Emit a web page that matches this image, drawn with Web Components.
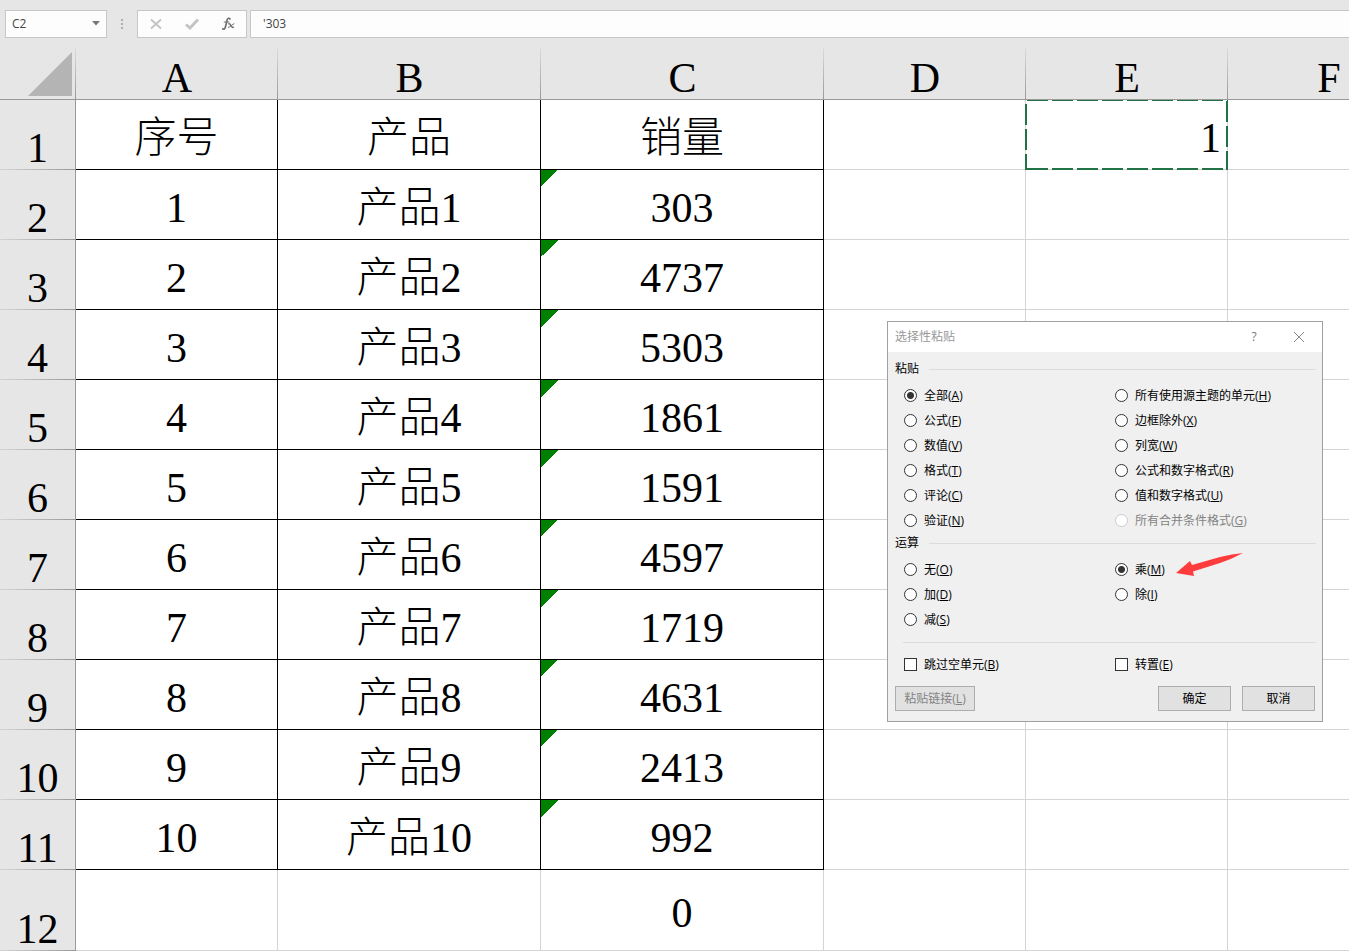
<!DOCTYPE html>
<html lang="zh-CN">
<head>
<meta charset="utf-8">
<title>选择性粘贴</title>
<style>
  body {
    margin: 0;
    background: #fff;
    color: #000;
    font: 12px/20px "Open Sans", "Noto Sans CJK SC", sans-serif;
  }
</style>
</head>
<body>

<sheet-app>
  <formula-bar slot="bar" cell="C2" value="'303"></formula-bar>
  <sheet-grid></sheet-grid>
  <paste-dialog slot="dialog" heading="选择性粘贴">
    <option-group id="paste" label="粘贴"></option-group>
    <option-group id="operation" label="运算"></option-group>
    <option-group id="extras" type="checkbox"></option-group>
    <pointer-arrow slot="note"></pointer-arrow>
  </paste-dialog>
</sheet-app>

<script>
function attach(el, html) {
  const template = document.createElement('template');
  template.innerHTML = html;
  const shadow = el.attachShadow({ mode: 'open' });
  shadow.appendChild(template.content.cloneNode(true));
  return shadow;
}

// "全部(A)" -> "全部(<u>A</u>)"
function mnemonic(text) {
  return text.replace(/\((\w)\)$/, '(<u>$1</u>)');
}

class SheetApp extends HTMLElement {
  constructor() {
    super();
    attach(this, `
      <style>
        :host {
          display: flex;
          flex-direction: column;
          position: relative;
          height: 100vh;
          overflow: hidden;
        }
        /* the dialog floats over the sheet */
        slot[name="dialog"]::slotted(*) {
          position: absolute;
          left: 887px;
          top: 321px;
        }
      </style>
      <slot name="bar"></slot>
      <slot></slot>
      <slot name="dialog"></slot>
    `);
  }
}

class FormulaBar extends HTMLElement {
  constructor() {
    super();
    this._root = attach(this, `
      <style>
        :host {
          display: flex;
          flex: none;
          padding: 10px 0 10px 5px;
          background: #e6e6e6;
        }
        .box {
          box-sizing: border-box;
          display: flex;
          height: 28px;
          background: #fdfdfd;
          border: 1px solid #c6c6c6;
        }
        .name { width: 102px; }
        .tools { width: 110px; margin-right: 3px; }
        .formula { flex: 1; border-right: 0; }
        input {
          flex: 1;
          min-width: 0;
          box-sizing: border-box;
          padding: 0 6px;
          border: 0;
          outline: 0;
          background: none;
          font: inherit;
          color: #444;
        }
        .formula input { padding: 0 12px; }
        button {
          display: grid;
          place-items: center;
          padding: 0;
          border: 0;
          background: none;
        }
        .name button { width: 20px; }
        .tools button { flex: 1; }
        .grip {
          width: 30px;
          display: grid;
          place-items: center;
        }
      </style>
      <div class="box name">
        <input id="cell" aria-label="名称框">
        <button aria-label="展开">
          <svg width="8" height="6"><path d="M0 0h8L4 4.500z" fill="#777"/></svg>
        </button>
      </div>
      <div class="grip">
        <svg width="2" height="10"><path d="M0 0h2v2H0zM0 4h2v2H0zM0 8h2v2H0z" fill="#adadad"/></svg>
      </div>
      <div class="box tools">
        <button aria-label="取消">
          <svg width="12" height="12"><path d="M1 1.5L11 10.5M11 1.5L1 10.5" stroke="#c3c3c3" stroke-width="1.8"/></svg>
        </button>
        <button aria-label="输入">
          <svg width="14" height="12"><path d="M1 6.5L5 10L13 1.5" fill="none" stroke="#c3c3c3" stroke-width="2.8"/></svg>
        </button>
        <button aria-label="插入函数">
          <svg width="14" height="14" fill="none" stroke="#707070" stroke-linecap="round">
            <path d="M9 2C8.300.8 6.600 1 6.100 3L4.400 10C3.900 12 2.800 12.600 1.800 11.800" stroke-width="1.7"/>
            <path d="M3.300 5H8" stroke-width="1.2"/>
            <path d="M8 6.800C9.700 6.300 10 11 12.200 10.300" stroke-width="1.6"/>
            <path d="M13 6.700C11.400 6.700 9.400 10.500 7.400 10.400" stroke-width="1"/>
          </svg>
        </button>
      </div>
      <div class="box formula"><input id="value" aria-label="编辑栏"></div>
    `);
  }

  connectedCallback() {
    this._root.getElementById('cell').value = this.getAttribute('cell');
    this._root.getElementById('value').value = this.getAttribute('value');
  }
}

class SheetGrid extends HTMLElement {
  #columns = [
    ['A', 202], ['B', 263], ['C', 283], ['D', 202], ['E', 202], ['F', 202],
  ];
  #sales = ['303', '4737', '5303', '1861', '1591', '4597', '1719', '4631', '2413', '992'];

  constructor() {
    super();
    this._root = attach(this, `
      <style>
        :host {
          display: block;
          flex: 1;
          overflow: hidden;
          background: #fff;
        }
        table {
          table-layout: fixed;
          width: 0;
          border-collapse: separate;
          border-spacing: 0;
          font: 300 42px/42px "Liberation Serif", "Noto Sans CJK SC", serif;
        }
        .rowhead { width: 76px; }
        th, td {
          box-sizing: border-box;
          height: 70px;
          padding: 0;
          font-weight: 300;
          white-space: nowrap;
        }
        td {
          position: relative;
          padding-top: 6px;
          border: 0 solid #d4d4d4;
          border-width: 0 1px 1px 0;
          text-align: center;
          vertical-align: middle;
        }
        td.data { border-color: #000; }
        td.text {
          background: linear-gradient(135deg, #008000 50%, transparent 50%) 0 0 / 17px 17px no-repeat;
        }
        td.copied { text-align: right; padding-right: 6px; }
        .tall > * { height: 81px; }
        th {
          background: #e6e6e6;
          vertical-align: bottom;
        }
        /* header dividers fade out towards the outer edge */
        thead th {
          height: 52px;
          border-bottom: 1px solid #999;
          background: linear-gradient(#dcdcdc, #999) right / 1px 100% no-repeat #e6e6e6;
        }
        tbody th {
          padding-bottom: 1px;
          border-right: 1px solid #999;
          background: linear-gradient(90deg, #d4d4d4, #999) bottom / 100% 1px no-repeat #e6e6e6;
        }
        .corner svg { display: block; margin: 0 4px 3px auto; }
        .ants {
          position: absolute;
          left: -1px;
          top: 0;
          stroke: #217346;
          stroke-width: 2;
          stroke-dasharray: 21 4;
        }
      </style>
      <table>
        <colgroup><col class="rowhead"></colgroup>
        <thead><tr></tr></thead>
        <tbody></tbody>
      </table>
    `);
    this._render();
  }

  _render() {
    const group = this._root.querySelector('colgroup');
    let head = '<th class="corner" aria-label="全选"><svg width="44" height="44"><path d="M44 0V44H0z" fill="#b4b4b4"/></svg></th>';
    for (const [name, width] of this.#columns) {
      const col = document.createElement('col');
      col.style.width = width + 'px';
      group.appendChild(col);
      head += `<th scope="col">${name}</th>`;
    }
    this._root.querySelector('thead tr').innerHTML = head;

    const rows = [['序号', '产品', '销量']];
    this.#sales.forEach((n, i) => rows.push([i + 1, '产品' + (i + 1), n]));
    rows.push(['', '', '0']);

    this._root.querySelector('tbody').innerHTML = rows.map((row, r) => {
      const last = r === rows.length - 1;
      let html = `<tr class="${last ? 'tall' : ''}"><th scope="row">${r + 1}</th>`;
      row.forEach((value, c) => {
        const classes = last ? '' : 'data' + (c === 2 && r > 0 ? ' text' : '');
        html += `<td class="${classes}">${value}</td>`;
      });
      html += '<td></td>' + (r === 0 ? this._copiedCell() : '<td></td>') + '<td></td>';
      return html + '</tr>';
    }).join('');
  }

  // cell on the clipboard, with its dashed outline
  _copiedCell() {
    return `<td class="copied">1<svg class="ants" width="203" height="70">
      <path d="M2 0H203"/>
      <path d="M2 69H203"/>
      <path d="M1 4V70"/>
      <path d="M202 1V70"/>
    </svg></td>`;
  }
}

class PasteDialog extends HTMLElement {
  constructor() {
    super();
    const root = attach(this, `
      <style>
        :host {
          box-sizing: border-box;
          display: block;
          width: 436px;
          background: #f0f0f0;
          border: 1px solid #a0a0a0;
        }
        header {
          display: flex;
          align-items: center;
          height: 30px;
          padding: 0 7px;
          background: #fff;
          color: #999;
        }
        h1 { flex: 1; margin: 0; font: inherit; }
        header button {
          display: grid;
          place-items: center;
          width: 32px;
          height: 28px;
          margin-left: 13px;
          padding: 0;
          border: 0;
          background: none;
          color: #777;
          font: inherit;
        }
        .body { padding: 7px 6px 0 7px; }
        footer {
          display: flex;
          gap: 11px;
          padding: 9px 7px 10px;
        }
        footer button {
          box-sizing: border-box;
          width: 73px;
          height: 25px;
          padding: 0;
          border: 1px solid #adadad;
          background: #e1e1e1;
          color: #000;
          font: inherit;
        }
        footer button:disabled {
          width: 80px;
          margin-right: auto;
          color: #838383;
        }
        slot[name="note"]::slotted(*) {
          position: absolute;
          left: 288px;
          top: 231px;
        }
      </style>
      <header>
        <h1></h1>
        <button aria-label="帮助">?</button>
        <button aria-label="关闭">
          <svg width="12" height="12"><path d="M1 1L11 11M11 1L1 11" stroke="#8c8c8c"/></svg>
        </button>
      </header>
      <div class="body"><slot></slot></div>
      <footer>
        <button disabled>粘贴链接(<u>L</u>)</button>
        <button>确定</button>
        <button>取消</button>
      </footer>
      <slot name="note"></slot>
    `);
    this._title = root.querySelector('h1');
  }

  connectedCallback() {
    this.setAttribute('role', 'dialog');
    this._title.textContent = this.getAttribute('heading');
  }
}

// Titled block of radios or tick boxes, filled column by column
class OptionGroup extends HTMLElement {
  constructor() {
    super();
    this._root = attach(this, `
      <style>
        :host { display: block; }
        .title {
          display: flex;
          align-items: center;
          gap: 10px;
          height: 20px;
          margin-bottom: 4px;
        }
        .title::after {
          content: "";
          flex: 1;
          height: 1px;
          background: #dcdcdc;
        }
        .title.bare {
          height: 1px;
          margin: 10px 0 9px 8px;
        }
        .title.bare span { display: none; }
        .options {
          display: grid;
          grid-auto-rows: 25px;
          grid-template-columns: 1fr 1fr;
          padding-left: 9px;
          column-gap: 10px;
        }
        label {
          display: flex;
          align-items: center;
          gap: 7px;
          white-space: nowrap;
        }
        label.off { color: #838383; }
        input {
          appearance: none;
          box-sizing: border-box;
          flex: none;
          width: 13px;
          height: 13px;
          margin: 0;
          border: 1px solid #333;
          background: #fff;
        }
        input[type="radio"] { border-radius: 50%; }
        input[type="radio"]:checked {
          background: radial-gradient(circle, #333 3px, #fff 4px);
        }
        input[type="checkbox"]:checked { background: #333; }
        input:disabled { border-color: #ccc; }
      </style>
      <div class="title"><span id="label"></span></div>
      <div class="options" role="group" aria-labelledby="label"></div>
    `);
  }

  set options(columns) {
    const type = this.getAttribute('type') || 'radio';
    const title = this.getAttribute('label');
    this._root.getElementById('label').textContent = title || '';
    this._root.querySelector('.title').classList.toggle('bare', !title);

    const box = this._root.querySelector('.options');
    box.innerHTML = columns.flatMap((column, c) => column.map((text, r) => {
      const checked = text === this.getAttribute('value') ? 'checked' : '';
      const off = text === this.getAttribute('off');
      return `<label class="${off ? 'off' : ''}" style="grid-area: ${r + 1} / ${c + 1}">
        <input type="${type}" name="option" ${checked} ${off ? 'disabled' : ''}>
        <span>${mnemonic(text)}</span>
      </label>`;
    })).join('');
  }
}

class PointerArrow extends HTMLElement {
  constructor() {
    super();
    attach(this, `
      <style>
        :host { display: block; pointer-events: none; }
        svg { display: block; }
      </style>
      <svg width="68" height="24">
        <path d="M0 20L14 8L16 12L44 4Q56 1 67 0Q56 6 44 10L17 18.500L18 23z" fill="#ff3b3b"/>
      </svg>
    `);
  }
}

customElements.define('sheet-app', SheetApp);
customElements.define('formula-bar', FormulaBar);
customElements.define('sheet-grid', SheetGrid);
customElements.define('paste-dialog', PasteDialog);
customElements.define('option-group', OptionGroup);
customElements.define('pointer-arrow', PointerArrow);

const paste = document.getElementById('paste');
paste.setAttribute('value', '全部(A)');
paste.setAttribute('off', '所有合并条件格式(G)');
paste.options = [
  ['全部(A)', '公式(F)', '数值(V)', '格式(T)', '评论(C)', '验证(N)'],
  ['所有使用源主题的单元(H)', '边框除外(X)', '列宽(W)', '公式和数字格式(R)', '值和数字格式(U)', '所有合并条件格式(G)'],
];

const operation = document.getElementById('operation');
operation.setAttribute('value', '乘(M)');
operation.options = [
  ['无(O)', '加(D)', '减(S)'],
  ['乘(M)', '除(I)'],
];

document.getElementById('extras').options = [['跳过空单元(B)'], ['转置(E)']];
</script>
</body>
</html>
